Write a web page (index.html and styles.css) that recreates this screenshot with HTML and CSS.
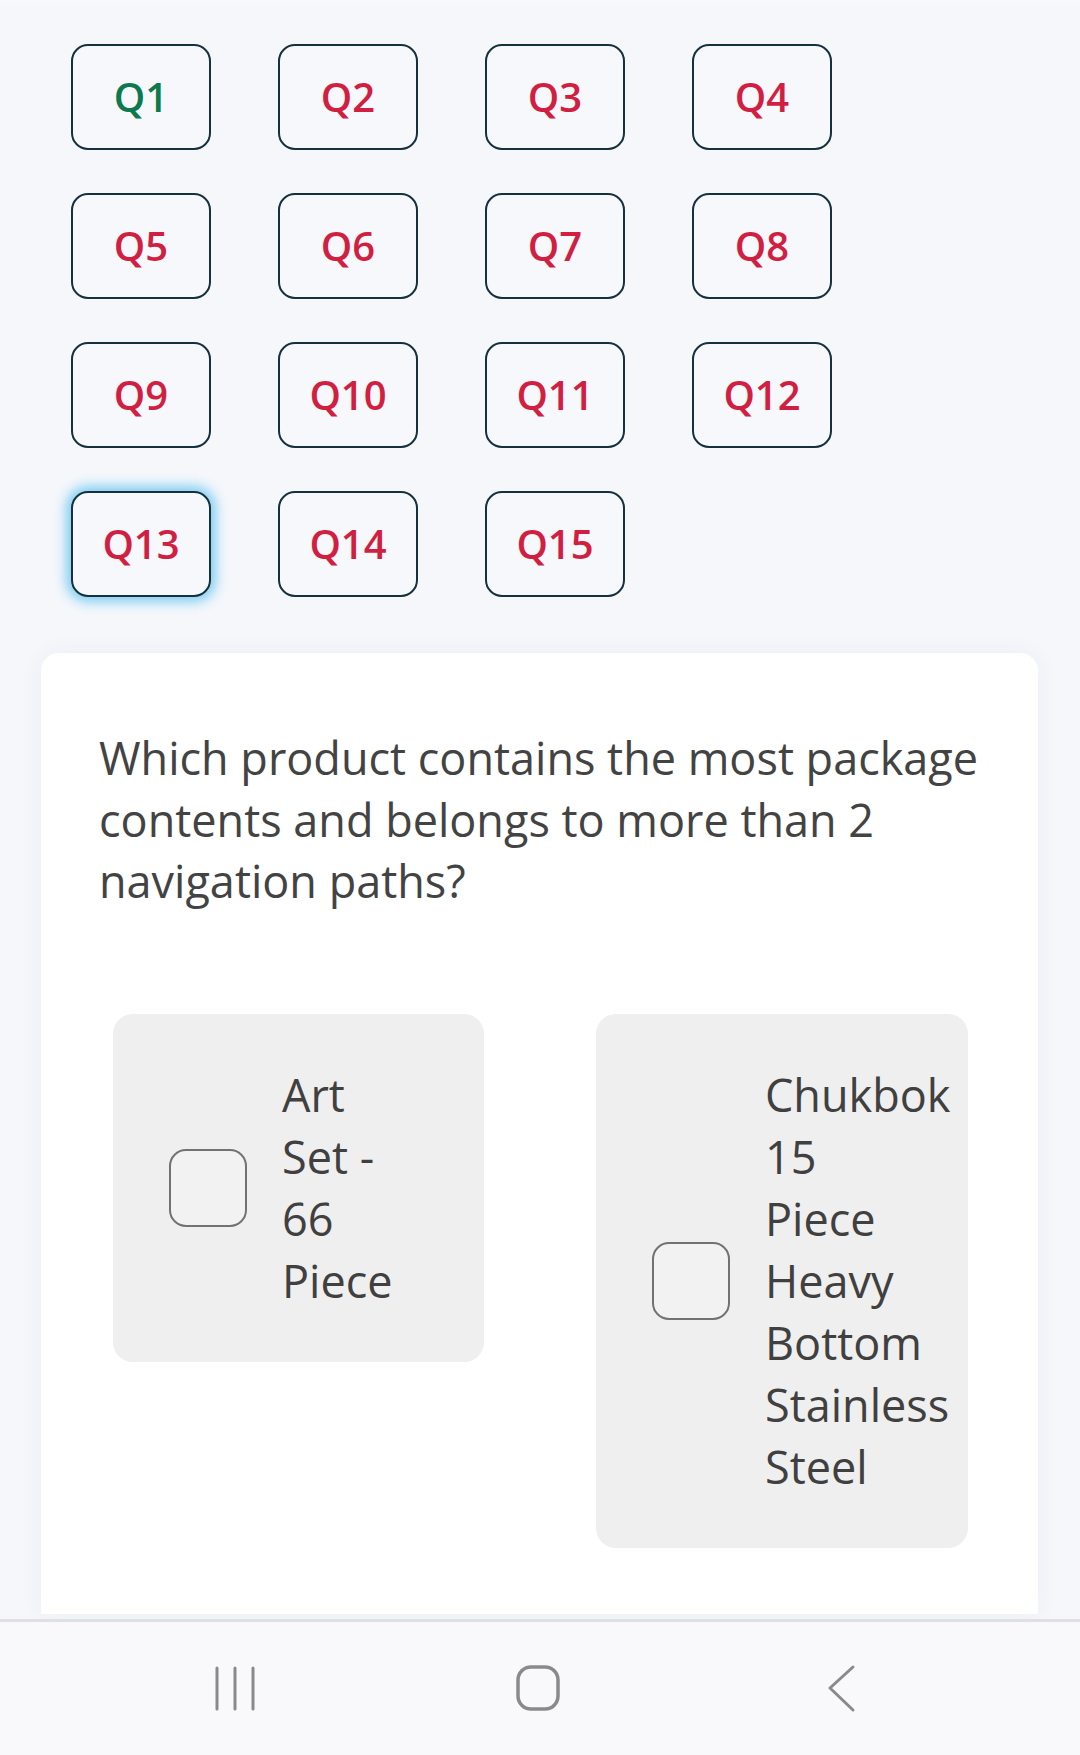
FILE: index.html
```html
<!DOCTYPE html>
<html lang="en">
<head>
<meta charset="utf-8">
<title>Quiz</title>
<link rel="stylesheet" href="styles.css">
</head>
<body>
<div class="screen">
  <main class="content">
    <div class="qgrid">
      <button class="qbtn done">Q1</button>
      <button class="qbtn">Q2</button>
      <button class="qbtn">Q3</button>
      <button class="qbtn">Q4</button>
      <button class="qbtn">Q5</button>
      <button class="qbtn">Q6</button>
      <button class="qbtn">Q7</button>
      <button class="qbtn">Q8</button>
      <button class="qbtn">Q9</button>
      <button class="qbtn">Q10</button>
      <button class="qbtn">Q11</button>
      <button class="qbtn">Q12</button>
      <button class="qbtn current">Q13</button>
      <button class="qbtn">Q14</button>
      <button class="qbtn">Q15</button>
    </div>
    <section class="card">
      <p class="question">Which product contains the most package contents and belongs to more than 2 navigation paths?</p>
      <div class="options">
        <label class="option">
          <span class="box"></span>
          <span class="opt-text">Art Set - 66 Piece</span>
        </label>
        <label class="option">
          <span class="box"></span>
          <span class="opt-text">Chukbok 15 Piece Heavy Bottom Stainless Steel</span>
        </label>
      </div>
    </section>
  </main>
  <nav class="navbar">
    <svg class="nav-icon" width="60" height="60" viewBox="0 0 60 60" aria-hidden="true">
      <g stroke="#8a8a8d" stroke-width="3" stroke-linecap="round">
        <line x1="12" y1="9" x2="12" y2="50"/>
        <line x1="30" y1="9" x2="30" y2="50"/>
        <line x1="48" y1="9" x2="48" y2="50"/>
      </g>
    </svg>
    <svg class="nav-icon" width="60" height="60" viewBox="0 0 60 60" aria-hidden="true">
      <rect x="10" y="8" width="40" height="42" rx="13" fill="none" stroke="#8a8a8d" stroke-width="3.5"/>
    </svg>
    <svg class="nav-icon" width="60" height="60" viewBox="0 0 60 60" aria-hidden="true">
      <polyline points="42,8 19,29 42,51" fill="none" stroke="#8a8a8d" stroke-width="3" stroke-linecap="round" stroke-linejoin="round"/>
    </svg>
  </nav>
</div>
</body>
</html>
```

FILE: styles.css
```css
* {
  box-sizing: border-box;
}

html, body {
  margin: 0;
  padding: 0;
}

body {
  background: #f5f7fb;
  font-family: "Open Sans", "Noto Sans", sans-serif;
}

.screen {
  display: flex;
  flex-direction: column;
  height: 1755px;
  overflow: hidden;
}

.content {
  flex: 1;
  min-height: 0;
  overflow: hidden;
  display: flex;
  flex-direction: column;
  background: linear-gradient(#f8f9fc 0, #f5f7fb 10px, #f5f7fb 100%);
}

.qgrid {
  display: grid;
  grid-template-columns: repeat(4, 140px);
  column-gap: 67px;
  row-gap: 43px;
  padding: 44px 0 0 71px;
}

.qbtn {
  height: 106px;
  border: 2.5px solid #15313d;
  border-radius: 17px;
  background: #f6f8fc;
  color: #d11f42;
  font-family: "Open Sans", "Noto Sans", sans-serif;
  font-weight: 600;
  font-size: 40px;
  padding: 0;
  line-height: 1;
}

.qbtn.done {
  color: #0b7a4c;
}

.qbtn.current {
  box-shadow: 0 0 12px 5px rgba(100, 195, 240, 0.8);
}

.card {
  flex: 1;
  margin: 56px 42px 5px 41px;
  background: #ffffff;
  border-radius: 18px 18px 0 0;
  padding: 74px 50px 0 58px;
  box-shadow: 0 0 24px rgba(30, 50, 90, 0.05);
}

.question {
  margin: 0;
  font-size: 45px;
  line-height: 61.5px;
  color: #434343;
}

.options {
  display: grid;
  grid-template-columns: 371px 372px;
  column-gap: 112px;
  align-items: start;
  margin: 102px 0 0 14px;
}

.option {
  display: flex;
  align-items: center;
  background: #efefef;
  border-radius: 20px;
  padding: 50px 16px 50px 56px;
}

.box {
  flex: 0 0 78px;
  width: 78px;
  height: 78px;
  border: 2px solid #727272;
  border-radius: 17px;
  margin-right: 35px;
  background: #f2f2f2;
}

.opt-text {
  width: 126px;
  font-size: 45px;
  line-height: 62px;
  color: #404040;
}

.navbar {
  flex: 0 0 136px;
  height: 136px;
  background: #f9f9fb;
  border-top: 3px solid #dfdfe4;
  display: grid;
  grid-template-columns: 1fr 1fr 1fr;
  align-items: center;
  justify-items: center;
  padding: 0 88px 0 84px;
}

.nav-icon {
  display: block;
}
```
